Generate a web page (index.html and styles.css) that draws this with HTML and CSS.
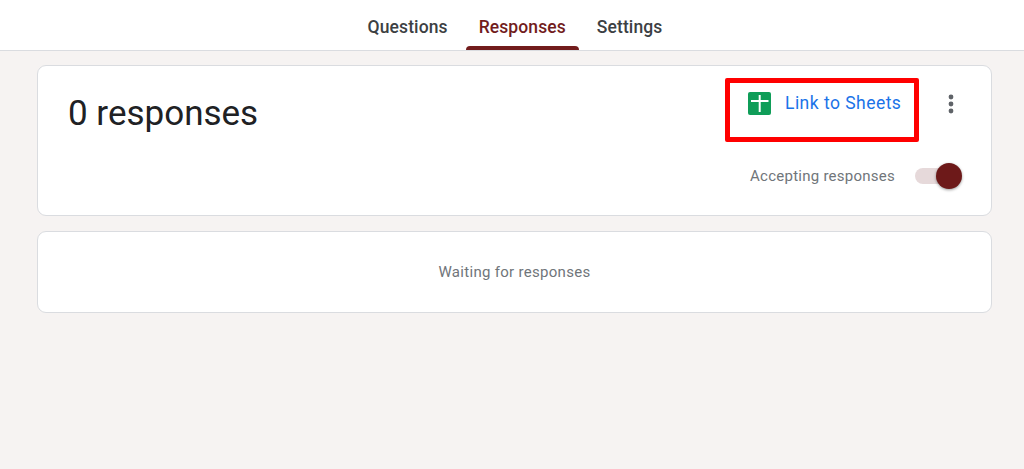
FILE: index.html
```html
<!DOCTYPE html>
<html lang="en">
<head>
  <meta charset="UTF-8" />
  <meta name="viewport" content="width=device-width, initial-scale=1.0" />
  <title>Responses</title>
  <link rel="stylesheet" href="styles.css">
</head>
<body>
  <header class="tabs">
    <a class="tab">Questions</a>
    <a class="tab tab-active">Responses</a>
    <a class="tab">Settings</a>
  </header>

  <main class="content">
    <section class="card card-summary">
      <div class="summary-top">
        <h1 class="count">0 responses</h1>
        <div class="highlight">
          <svg class="sheets-icon" width="23" height="23" viewBox="0 0 23 23">
            <rect width="23" height="23" rx="2" fill="#0f9d58" />
            <path d="M3 9h17.500M11.700 3v17" stroke="#fff" stroke-width="2" fill="none" />
          </svg>
          <span class="sheets-link">Link to Sheets</span>
        </div>
        <svg class="more-icon" width="8" height="20" viewBox="0 0 8 20">
          <circle cx="4" cy="3" r="2.400" fill="#5f6368" />
          <circle cx="4" cy="10" r="2.400" fill="#5f6368" />
          <circle cx="4" cy="17" r="2.400" fill="#5f6368" />
        </svg>
      </div>
      <div class="accepting">
        <span class="accepting-label">Accepting responses</span>
        <span class="switch"><span class="switch-knob"></span></span>
      </div>
    </section>

    <section class="card card-empty">Waiting for responses</section>
  </main>
</body>
</html>
```

FILE: styles.css
```css
html, body {
  height: 100%;
}
body {
  margin: 0;
  background-color: #f6f3f2;
  font-family: Roboto, "Open Sans", sans-serif;
  overflow: hidden;
}
.tabs {
  display: flex;
  justify-content: center;
  height: 50px;
  gap: 5px;
  padding-left: 6px;
  background: #fff;
  border-bottom: 1px solid #dadce0;
}
.tab {
  position: relative;
  padding: 0 13px;
  line-height: 54px;
  font-size: 17.500px;
  font-weight: 500;
  letter-spacing: 0.1px;
  color: #3c4043;
}
.tab-active {
  color: #721c1c;
}
.tab-active::after {
  content: "";
  position: absolute;
  left: 0;
  right: 0;
  bottom: 0;
  height: 4px;
  background: #721c1c;
  border-radius: 4px 4px 0 0;
}
.content {
  display: flex;
  flex-direction: column;
  gap: 15px;
  margin: 14px 32px 0 37px;
}
.card {
  box-sizing: border-box;
  background: #fff;
  border: 1px solid #dadce0;
  border-radius: 9px;
}
.card-summary {
  height: 151px;
  padding: 12px 29px 0 30px;
}
.summary-top {
  display: flex;
  align-items: flex-start;
}
.count {
  flex: 1;
  margin: 13px 0 0;
  font-size: 35px;
  line-height: 46px;
  font-weight: 400;
  color: #202124;
}
.highlight {
  box-sizing: border-box;
  display: flex;
  align-items: flex-start;
  gap: 14px;
  width: 194px;
  height: 64px;
  padding: 9px 0 0 18px;
  border: 5px solid #f00;
  border-radius: 2px;
}
.sheets-icon {
  flex: none;
}
.sheets-link {
  font-size: 17.500px;
  line-height: 23px;
  letter-spacing: 0.47px;
  color: #1a73e8;
}
.more-icon {
  margin: 16px 7px 0 28px;
}
.accepting {
  display: flex;
  justify-content: flex-end;
  align-items: center;
  gap: 20px;
  margin: 25px 13px 0 0;
}
.accepting-label {
  font-size: 15px;
  color: #70757a;
  letter-spacing: 0.25px;
}
.switch {
  position: relative;
  width: 34px;
  height: 16px;
  border-radius: 8px;
  background: #e6d9da;
}
.switch-knob {
  position: absolute;
  right: -13px;
  top: -5px;
  width: 26px;
  height: 26px;
  border-radius: 50%;
  background: #6d1919;
  box-shadow: 0 1px 3px rgba(0, 0, 0, 0.4);
}
.card-empty {
  height: 82px;
  display: flex;
  align-items: center;
  justify-content: center;
  font-size: 15px;
  letter-spacing: 0.3px;
  color: #70757a;
}
```
